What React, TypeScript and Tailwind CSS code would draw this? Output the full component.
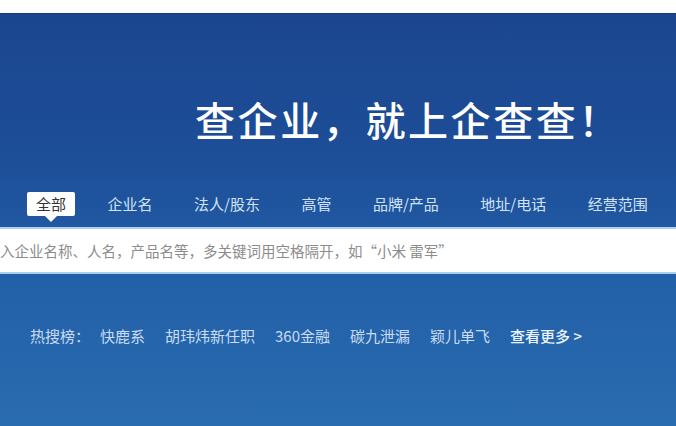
const tabs = ['企业名', '法人/股东', '高管', '品牌/产品', '地址/电话', '经营范围'];
const hot = ['快鹿系', '胡玮炜新任职', '360金融', '碳九泄漏', '颖儿单飞'];

export default function App() {
  return (
    <div
      className="w-[676px] h-[426px] overflow-hidden bg-white flex flex-col"
      style={{ fontFamily: '"Noto Sans CJK SC", "Noto Sans", sans-serif' }}
    >
      <div className="h-[13px] shrink-0 bg-white" />
      <div className="flex-1 flex flex-col border-t border-[#17386f] bg-[linear-gradient(180deg,#1b468f_0%,#1d4e98_35%,#2260a8_65%,#2a6cb0_100%)]">
        {/* headline */}
        <h1 className="mt-[85px] pl-[195px] text-[40px] leading-[40px] font-medium text-white tracking-[2.6px]">
          查企业，就上企查查！
        </h1>

        {/* tabs */}
        <div className="mt-[53px] pl-[27px] flex items-center gap-[23.5px] text-[15px] leading-[24px] text-[#d3e3f6]">
          <div className="relative px-[9px] bg-white text-[#333] rounded-[2px]">
            全部
            <span className="absolute left-1/2 -translate-x-1/2 top-full w-0 h-0 border-x-[6px] border-x-transparent border-t-[6px] border-t-white" />
          </div>
          {tabs.map((t) => (
            <div key={t} className="px-[9px]">
              {t}
            </div>
          ))}
        </div>

        {/* search input */}
        <div className="mt-[11px] h-[47px] bg-white border-y-2 border-[#a9d1f2] flex items-center">
          <span className="text-[14.5px] text-[#8c8c8c] whitespace-nowrap">
            入企业名称、人名，产品名等，多关键词用空格隔开，如“小米 雷军”
          </span>
        </div>

        {/* hot searches */}
        <div className="mt-[52px] pl-[30px] flex items-center text-[15px] leading-[20px] text-[#c9dcf3]">
          <span className="mr-[10px]">热搜榜：</span>
          <div className="flex items-center gap-[20px]">
            {hot.map((h) => (
              <span key={h}>{h}</span>
            ))}
            <span className="text-[#eef4fc] font-medium">查看更多 &gt;</span>
          </div>
        </div>
      </div>
    </div>
  );
}
